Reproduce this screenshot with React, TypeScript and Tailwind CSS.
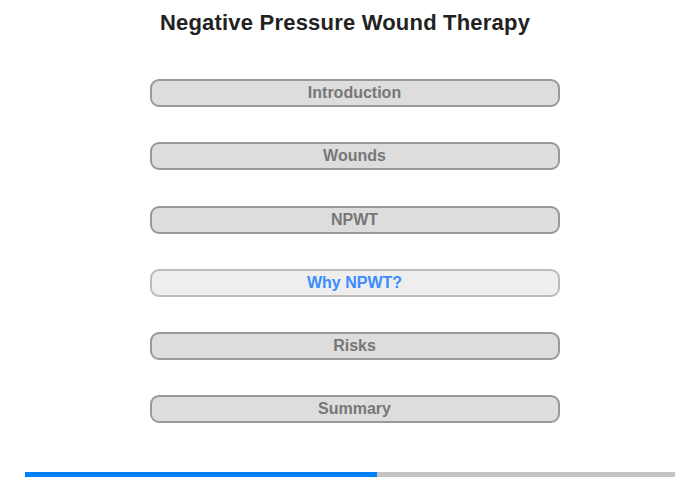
import React from "react";

const items = ["Introduction", "Wounds", "NPWT", "Why NPWT?", "Risks", "Summary"];

export default function App() {
  return (
    <div
      className="w-[700px] h-[480px] bg-white flex flex-col items-center"
      style={{ fontFamily: '"Liberation Sans", Arial, sans-serif' }}
    >
      <div className="pt-[10px] pr-[10px] h-[35px] text-[22px] leading-[26px] tracking-[0.2px] font-bold text-[#222]">
        Negative Pressure Wound Therapy
      </div>
      <div className="mt-[44px] pl-[9px] flex flex-col gap-[35.3px]">
        {items.map((t) => {
          const active = t === "Why NPWT?";
          return (
            <div
              key={t}
              className={
                active
                  ? "w-[410px] h-[28px] rounded-[9px] border-2 border-[#bbbbbb] bg-[#eeeeee] flex items-center justify-center text-[16px] font-bold text-[#3b8cff]"
                  : "w-[410px] h-[28px] rounded-[9px] border-2 border-[#999999] bg-[#dddddd] flex items-center justify-center text-[16px] font-bold text-[#777777]"
              }
            >
              {t}
            </div>
          );
        })}
      </div>
      <div className="mt-[49px] w-[650px] h-[5px] bg-[#c3c3c3] flex">
        <div className="w-[352px] h-full bg-[#0080ff]" />
      </div>
    </div>
  );
}
